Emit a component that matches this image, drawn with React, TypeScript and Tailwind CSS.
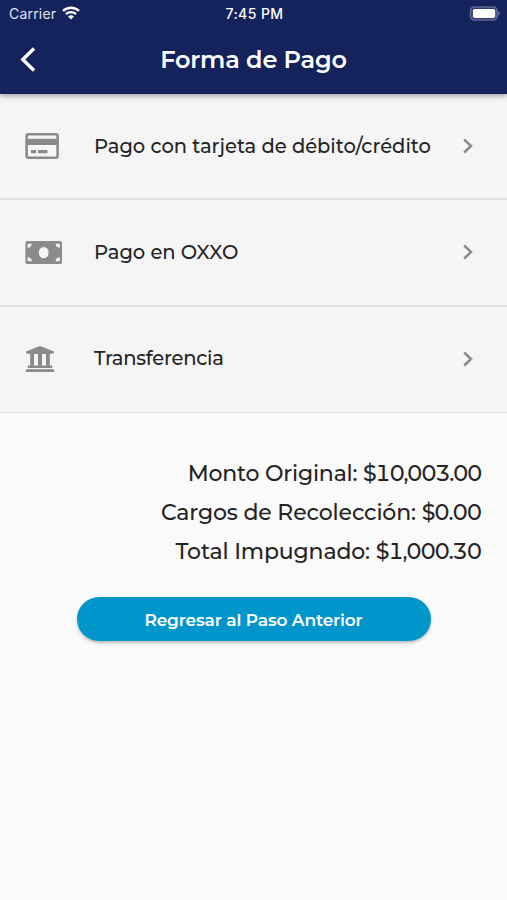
import React from 'react';

interface PaymentOption {
  label: string;
  icon: React.ReactNode;
  textClass: string;
}

const CardIcon = () => (
  <svg width="34" height="26" viewBox="0 0 34 26" fill="none">
    <rect x="1.6" y="1.3" width="31" height="23.4" rx="2" stroke="#8b8b8b" strokeWidth="2.6" />
    <path d="M1.5 5.8h31v6.2h-31z" fill="#8b8b8b" />
    <path d="M6 16.9h5.2v3.4H6zM13 16.9h9.4v3.4H13z" fill="#8b8b8b" />
  </svg>
);

const CashIcon = () => (
  <svg width="37" height="23" viewBox="0 0 37 23">
    <rect x=".4" width="36.6" height="23" rx="2" fill="#8b8b8b" />
    <ellipse cx="18.7" cy="11.6" rx="4.9" ry="5.7" fill="#f5f5f5" />
    <path
      d="M2.6 2.8h4.2a4 4 0 0 1-4.2 4zM34.8 2.8h-4.2a4 4 0 0 0 4.2 4zM2.6 20.2h4.2a4 4 0 0 0-4.2-4zM34.8 20.2h-4.2a4 4 0 0 1 4.2-4z"
      fill="#f5f5f5"
    />
  </svg>
);

const BankIcon = () => (
  <svg className="ml-px" width="28" height="26" viewBox="0 0 28 26" fill="#8b8b8b">
    <path d="M14 0 28 5.4v1.9h-1.8c0 .5-.4.8-1 .8H2.8c-.6 0-1-.3-1-.8H0V5.4z" />
    <path d="M4.2 8H8v12H4.2zM12 8h4v12h-4zM20 8h3.8v12H20z" />
    <path d="M2.8 19.6h22.4c.6 0 1 .3 1 .9V22H1.8v-1.500c0-.6.4-.9 1-.9z" />
    <path d="M0 23.200h28V26H0z" />
  </svg>
);

const options: PaymentOption[] = [
  { label: 'Pago con tarjeta de débito/crédito', icon: <CardIcon />, textClass: 'tracking-[-0.02px] pt-px' },
  { label: 'Pago en OXXO', icon: <CashIcon />, textClass: 'tracking-[-0.03px]' },
  { label: 'Transferencia', icon: <BankIcon />, textClass: 'tracking-[-0.25px] pb-px' },
];

const StatusBar = () => (
  <div className="h-[26px] grid grid-cols-3 items-center pl-[9px] pr-[7px] text-[14px] font-['Inter',sans-serif]">
    <div className="flex items-center gap-[6px]">
      <span className="text-[#dfe4f5] tracking-[0.2px]">Carrier</span>
      <svg width="18" height="14" viewBox="0 0 18 14" fill="none" stroke="#fff" strokeWidth="2.4">
        <path d="M1 5a11.4 11.4 0 0 1 16 0" />
        <path d="M4 8.2a7 7 0 0 1 10 0" />
        <path d="M9 13.6 6 10.6a4.3 4.3 0 0 1 6 0z" fill="#fff" stroke="none" />
      </svg>
    </div>
    <span className="text-center text-[14px] font-medium tracking-[0.4px]">7:45 PM</span>
    <svg className="justify-self-end" width="31" height="15" viewBox="0 0 31 15">
      <rect x="1.5" y="1" width="26.5" height="13" rx="3.8" fill="#2f3b70" stroke="#5f6896" strokeWidth="1.6" />
      <rect x="3.9" y="3" width="22.3" height="9" rx="1.8" fill="#fff" />
      <path d="M29.3 5.3c1 .4 1.5 1.2 1.5 2.2s-.5 1.8-1.5 2.2z" fill="#747ca6" />
    </svg>
  </div>
);

export default function App() {
  return (
    <div className="min-h-[900px] w-full bg-[#fafafa] text-[#242424] font-['Montserrat','Inter',sans-serif]">
      {/* Header */}
      <header className="relative z-10 h-[93.5px] bg-[#15235d] text-white shadow-[0_2px_5px_rgba(0,0,0,0.35)]">
        <StatusBar />
        <div className="grid grid-cols-[60px_1fr_60px] items-center h-[67px]">
          <button aria-label="Regresar" className="pl-5">
            <svg width="16" height="25" viewBox="0 0 16 25" fill="none" stroke="#fff" strokeWidth="3.4">
              <path d="M14 1.5 2.8 12.5 14 23.5" />
            </svg>
          </button>
          <h1 className="text-center text-[24px] font-semibold tracking-[-0.17px]">Forma de Pago</h1>
        </div>
      </header>

      {/* Payment options */}
      <ul className="bg-[#f5f5f5]">
        {options.map((option) => (
          <li
            key={option.label}
            className="flex items-center h-[106.5px] pl-[25px] pr-[34px] border-b-2 last:border-b border-[#e0e0e0]"
          >
            <span className="w-[69px]">{option.icon}</span>
            <span className={`flex-1 text-[19.5px] font-medium whitespace-nowrap ${option.textClass}`}>{option.label}</span>
            <svg width="10" height="16" viewBox="0 0 10 16" fill="none" stroke="#8b8b8b" strokeWidth="2.5">
              <path d="M1.2 1.5 8 8l-6.8 6.5" />
            </svg>
          </li>
        ))}
      </ul>

      {/* Totals */}
      <div className="pt-[41px] pr-[26px] text-right text-[22px] font-medium leading-[39px] whitespace-nowrap tabular-nums">
        <p className="tracking-[-0.2px]">
          Monto Original: <span className="tracking-[-1.35px]">$10,003.00</span>
        </p>
        <p className="tracking-[-0.15px]">
          Cargos de Recolección: <span className="tracking-[-1.1px]">$0.00</span>
        </p>
        <p className="tracking-[-0.15px]">
          Total Impugnado: <span className="tracking-[-1.2px]">$1,000.30</span>
        </p>
      </div>

      <div className="flex justify-center pt-[26px]">
        <button className="w-[354px] h-11 pt-[3px] rounded-full bg-[#0096cc] text-white text-[17px] font-semibold tracking-[-0.15px] shadow-[0_2px_3px_rgba(0,0,0,0.25)]">
          Regresar al Paso Anterior
        </button>
      </div>
    </div>
  );
}
